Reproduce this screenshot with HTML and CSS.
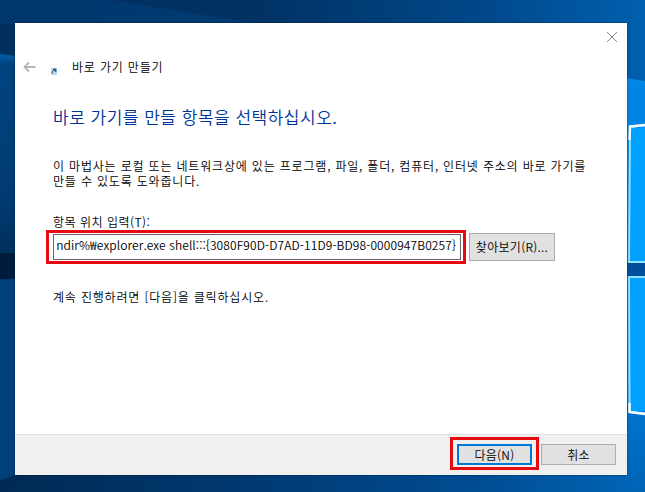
FILE: index.html
```html
<!DOCTYPE html>
<html lang="ko">
  <head>
    <meta charset="UTF-8" />
    <meta name="viewport" content="width=device-width, initial-scale=1.0" />
    <title>바로 가기 만들기</title>
    <link rel="stylesheet" href="styles.css" />
  </head>
  <body>
    <!-- 바탕 화면 -->
    <svg class="wallpaper" width="645" height="492" viewBox="0 0 645 492">
      <defs>
        <linearGradient id="sky">
          <stop offset="0" stop-color="#00305f" />
          <stop offset="0.4" stop-color="#003264" />
          <stop offset="0.75" stop-color="#00488a" />
          <stop offset="1" stop-color="#0060b0" />
        </linearGradient>
        <linearGradient id="floor">
          <stop offset="0" stop-color="#002a54" />
          <stop offset="0.4" stop-color="#003a73" />
          <stop offset="0.75" stop-color="#004d93" />
          <stop offset="1" stop-color="#0066b8" />
        </linearGradient>
        <linearGradient id="left" x2="0" y2="1">
          <stop offset="0" stop-color="#0060ac" />
          <stop offset="0.05" stop-color="#00437f" />
          <stop offset="0.7" stop-color="#003c74" />
          <stop offset="1" stop-color="#002f5e" />
        </linearGradient>
        <linearGradient id="right" x2="0" y2="1">
          <stop offset="0" stop-color="#0086e6" />
          <stop offset="0.75" stop-color="#0079d6" />
          <stop offset="1" stop-color="#0063b5" />
        </linearGradient>
      </defs>
      <rect width="645" height="492" fill="url(#sky)" />
      <path d="M0 0H110L260 24H0Z" fill="#0059a8" opacity="0.2" />
      <rect y="470" width="645" height="22" fill="url(#floor)" />
      <path d="M0 54L16 56V254H0Z" fill="url(#left)" />
      <rect y="253" width="16" height="26" fill="#001b3b" />
      <path d="M0 280L16 278V475L0 480Z" fill="#00407a" />
      <path d="M626 78L645 81V492H626Z" fill="url(#right)" />
      <rect x="626" y="262" width="19" height="14" fill="#004f9c" />
      <path d="M629 129L645 127V262H629Z" fill="#00a0ff" />
      <path d="M629 276H645V411L630 412Z" fill="#00a0ff" />
      <path d="M646 125L630 127L629 262H646M646 277H629L629.500 412L646 414" fill="none" stroke="#8fe3ff" stroke-width="2" />
      <path d="M646 125L630 126.500L629.500 140M629.500 403V412L646 414" fill="none" stroke="#f2fcff" stroke-width="2.500" />
    </svg>

    <div class="dialog">
      <div class="titlebar">
        <svg class="close" width="12" height="12" viewBox="0 0 12 12">
          <path d="M1 1L11 11M11 1L1 11" />
        </svg>
      </div>
      <div class="header">
        <svg class="back" width="13" height="12" viewBox="0 0 13 12">
          <path d="M12.500 6H1.500M6 1.500L1.500 6L6 10.500" />
        </svg>
        <svg class="shortcut" width="6" height="7" viewBox="0 0 6 7">
          <rect width="6" height="7" fill="#b9d5ea" />
          <path d="M1 5.500V4L3 2M2 1H5V4Z" fill="#225f99" stroke="#225f99" stroke-width="0.800" />
        </svg>
        <span class="name">바로 가기 만들기</span>
      </div>
      <div class="content">
        <h1>바로 가기를 만들 항목을 선택하십시오.</h1>
        <p class="desc">
          이 마법사는 로컬 또는 네트워크상에 있는 프로그램, 파일, 폴더, 컴퓨터, 인터넷 주소의 바로 가기를<br />
          만들 수 있도록 도와줍니다.
        </p>
        <div class="label">항목 위치 입력(T):</div>
        <div class="row">
          <div class="mark">
            <div class="field"><span>ndir%₩explorer.exe shell:::{3080F90D-D7AD-11D9-BD98-0000947B0257}</span></div>
          </div>
          <button class="btn browse">찾아보기(R)...</button>
        </div>
        <p class="next">계속 진행하려면 [다음]을 클릭하십시오.</p>
      </div>
      <div class="footer">
        <div class="mark">
          <button class="btn on">다음(N)</button>
        </div>
        <button class="btn">취소</button>
      </div>
    </div>
  </body>
</html>
```
FILE: styles.css
```css
* {
  margin: 0;
  padding: 0;
  box-sizing: border-box;
}
body {
  width: 645px;
  height: 492px;
  padding: 23px 18px 17px 15px;
  overflow: hidden;
  font-family: "Noto Sans CJK KR", sans-serif;
  font-size: 12px;
  font-weight: 350;
  line-height: 16px;
  letter-spacing: 0.82px;
  color: #000;
}
.wallpaper {
  position: absolute;
  top: 0;
  left: 0;
  z-index: -1;
}
.dialog {
  display: flex;
  flex-direction: column;
  height: 452px;
  background: #fff;
  box-shadow: 0 0 2px rgba(0, 0, 0, 0.5);
  white-space: nowrap;
}
.titlebar {
  display: flex;
  justify-content: flex-end;
  height: 30px;
  padding: 8px 9px 0 0;
}
.close {
  fill: none;
  stroke: #858585;
}
.header {
  display: flex;
  height: 30px;
  padding-left: 8px;
}
.back {
  margin-top: 8px;
  fill: none;
  stroke: #b5b5b5;
  stroke-width: 1.8;
}
.shortcut {
  margin: 15px 0 0 15px;
}
.name {
  margin: 6px 0 0 15px;
}
.content {
  flex: 1;
  padding: 0 31px 0 38px;
}
h1 {
  height: 24px;
  margin-top: 22px;
  font-size: 17px;
  font-weight: 350;
  line-height: 24px;
  letter-spacing: 0.5px;
  color: #003399;
}
.desc {
  margin-top: 29px;
  line-height: 15px;
}
.label {
  margin-top: 26px;
  letter-spacing: 0.5px;
}
.row {
  display: flex;
  align-items: center;
  gap: 3px;
}
.mark {
  border: 3px solid #e60b10;
}
.row .mark {
  width: 420px;
  height: 34px;
  margin-left: -7px;
  padding: 1px 2px 1px 4px;
}
.field {
  display: flex;
  justify-content: flex-end;
  height: 26px;
  padding-right: 4px;
  border: 1px solid #6f6268;
  line-height: 20px;
}
.field span {
  display: flex;
  justify-content: flex-end;
  width: 399px;
  overflow: hidden;
  letter-spacing: 0.1px;
}
.btn {
  width: 75px;
  height: 21px;
  border: 1px solid #adadad;
  background: #e1e1e1;
  font: inherit;
  line-height: 18px;
  letter-spacing: 0.3px;
}
.btn.on {
  display: block;
  border: 2px solid #0078d7;
  line-height: 16px;
}
.btn.browse {
  width: 86px;
  height: 28px;
}
.next {
  margin-top: 25px;
}
.footer {
  display: flex;
  align-items: flex-start;
  justify-content: flex-end;
  gap: 2px;
  height: 41px;
  padding: 2px 11px 0 0;
  border-top: 1px solid #dfdfdf;
  background: #f0f0f0;
}
.footer .mark {
  padding: 4px 4px 2px;
}
.footer > .btn {
  margin-top: 7px;
}
```
